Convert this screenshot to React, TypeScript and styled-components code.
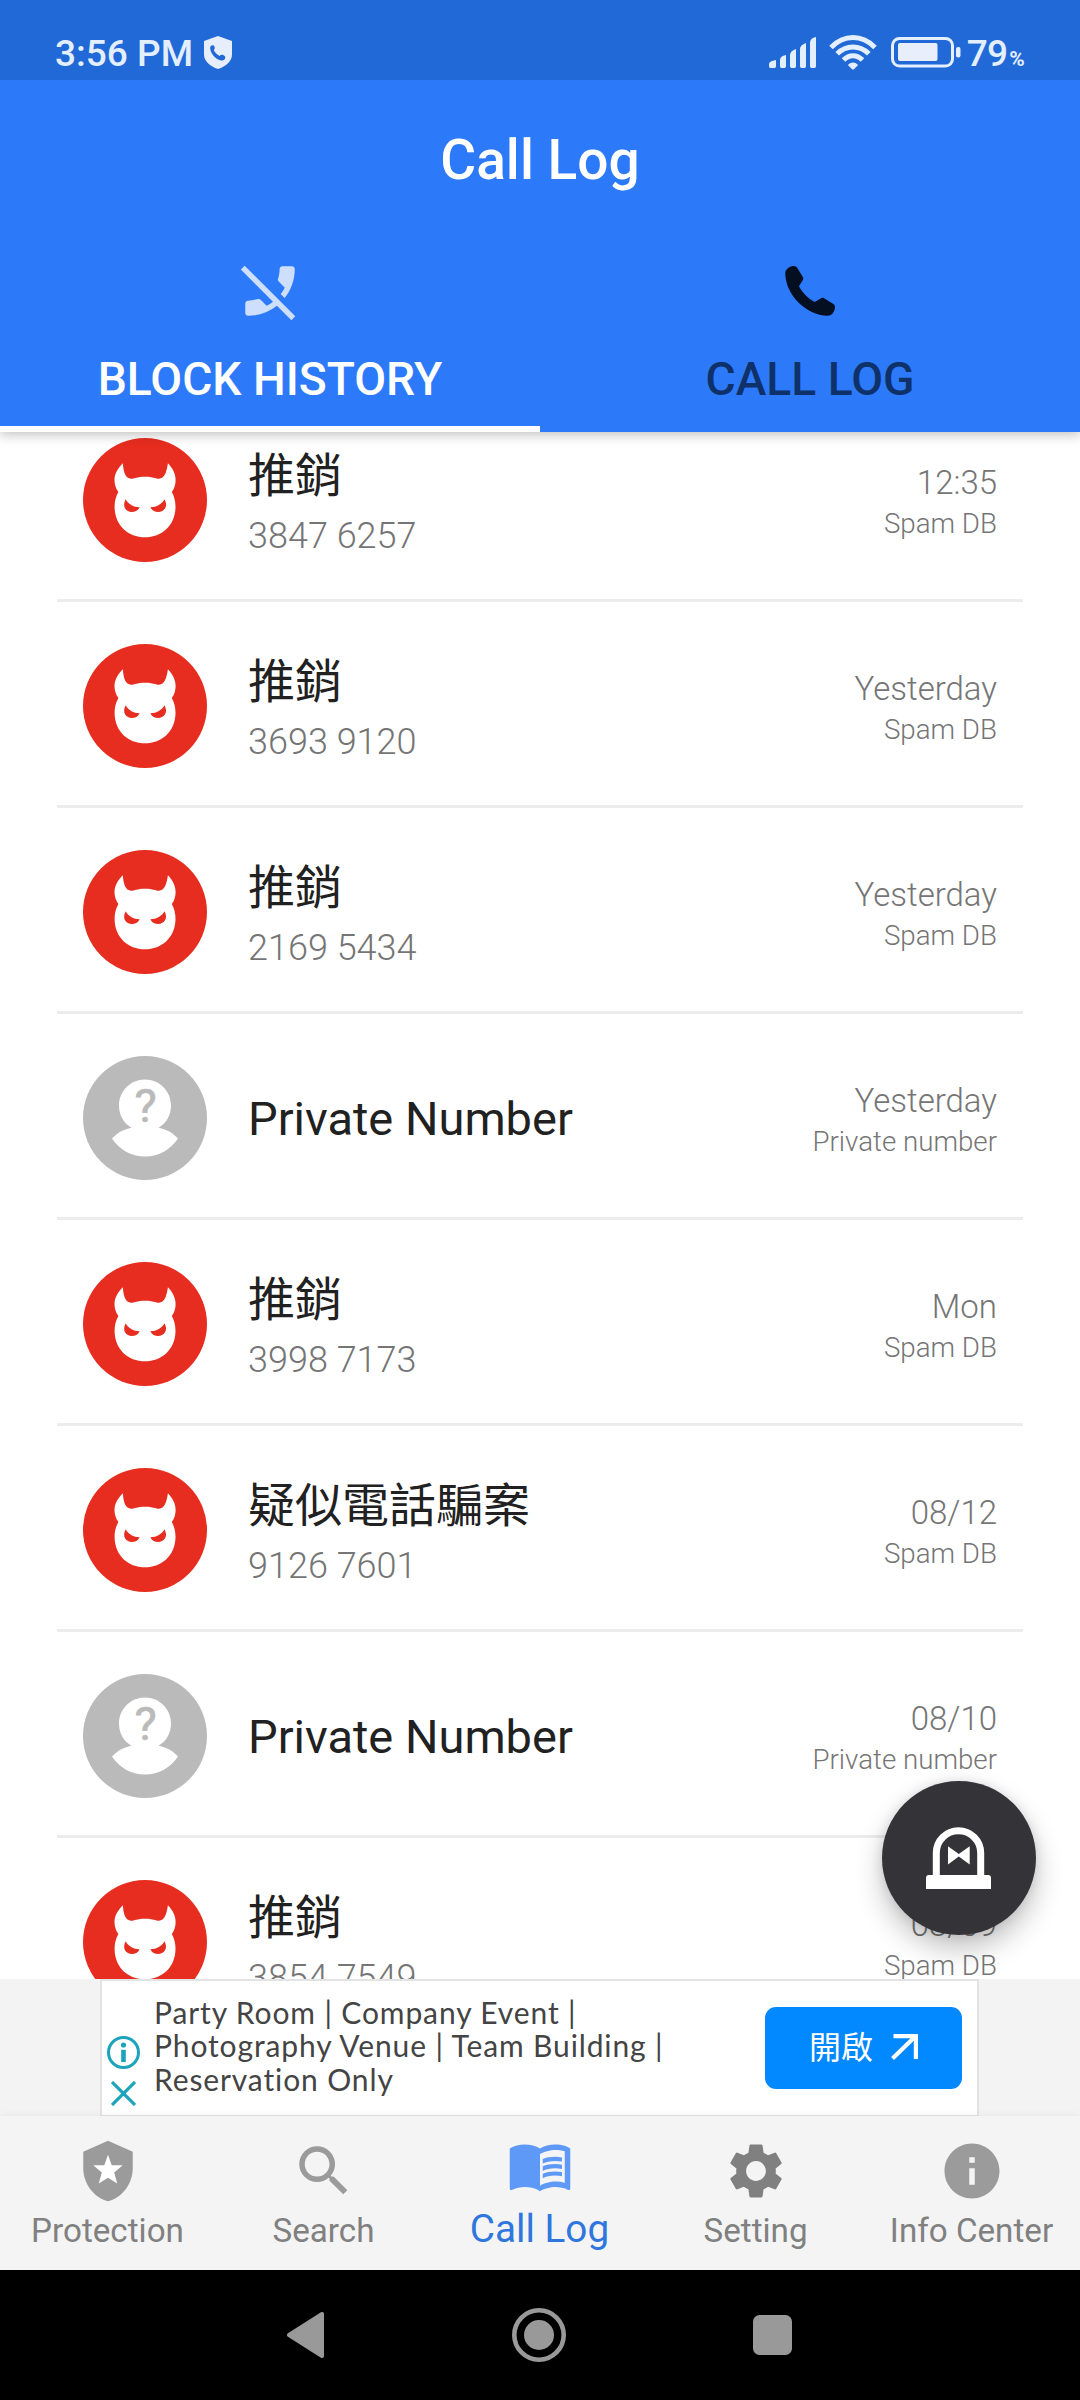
import React from "react";
import styled, { createGlobalStyle } from "styled-components";
import { MdInfo, MdMenuBook, MdPhoneDisabled, MdSearch, MdSettings } from "react-icons/md";

const GlobalStyle = createGlobalStyle`
  * { box-sizing: border-box; }
  body { margin: 0; background: #fff; }
  svg { display: block; flex: none; }
`;

const Screen = styled.div`
  display: flex;
  flex-direction: column;
  position: relative;
  width: 1080px;
  height: 2400px;
  overflow: hidden;
  background: #fff;
  font-family: Roboto, "Noto Sans CJK TC", sans-serif;
`;

const StatusBar = styled.div`
  display: flex;
  justify-content: space-between;
  position: relative;
  z-index: 2;
  height: 80px;
  padding: 33px 56px 0 55px;
  background: #2069d6;
  color: #e3eeff;
`;

const StatusGroup = styled.div`
  display: flex;
  align-items: flex-start;
  height: 42px;
`;

const Clock = styled.span`
  font-size: 37px;
  font-weight: 500;
  line-height: 42px;
  width: 149px;
  white-space: nowrap;
`;

const Percent = styled.span`
  margin-left: 6px;
  font-size: 37px;
  font-weight: 500;
  line-height: 42px;
  letter-spacing: -0.8px;
  small {
    margin-left: 2px;
    font-size: 21px;
    font-weight: 700;
  }
`;

const Header = styled.header`
  display: flex;
  flex-direction: column;
  position: relative;
  z-index: 1;
  height: 352px;
  background: #2c7afa;
  box-shadow: 0 2px 12px rgba(0, 0, 0, 0.28);
`;

const Title = styled.h1`
  margin: 0;
  padding-top: 48px;
  height: 154px;
  font-size: 55px;
  font-weight: 500;
  line-height: 64px;
  text-align: center;
  color: #fff;
`;

const Tabs = styled.div`
  display: flex;
  flex: 1;
`;

const Tab = styled.div<{ $active?: boolean }>`
  flex: 1;
  display: flex;
  flex-direction: column;
  align-items: center;
  padding-top: 24px;
  border-bottom: 6px solid ${(p) => (p.$active ? "#fff" : "transparent")};
  color: ${(p) => (p.$active ? "#fff" : "#0f3169")};
  font-size: 46.2px;
  font-weight: 500;
  svg {
    margin-bottom: 27px;
    color: ${(p) => (p.$active ? "#cedffe" : "#050f22")};
  }
  span {
    line-height: 56px;
    white-space: nowrap;
  }
`;

const List = styled.div`
  flex: none;
  height: 1547px;
  overflow: hidden;
  padding: 0 57px;
`;

const ListContent = styled.div`
  margin-top: -36px;
`;

const Row = styled.div`
  display: flex;
  align-items: center;
  height: 206px;
  padding: 5px 26px 0;
  border-bottom: 3px solid #ececec;
`;

const Details = styled.div<{ $single: boolean }>`
  flex: 1;
  display: flex;
  flex-direction: column;
  gap: ${(p) => (p.$single ? "0" : "10px")};
  padding: ${(p) => (p.$single ? "2px" : "5px")} 0 0 41px;
`;

const Name = styled.div`
  font-size: 47px;
  line-height: 56px;
  color: #212121;
`;

const Phone = styled.div`
  font-size: 36px;
  font-weight: 300;
  line-height: 44px;
  color: #757575;
`;

const Meta = styled.div`
  display: flex;
  flex-direction: column;
  align-items: flex-end;
  gap: 3px;
  padding-top: 4px;
  font-weight: 300;
  color: #757575;
`;

const When = styled.div`
  font-size: 33px;
  line-height: 40px;
`;

const Source = styled.div`
  font-size: 27.7px;
  line-height: 36px;
`;

const AdStrip = styled.div`
  flex: none;
  display: flex;
  height: 137px;
  padding: 0 101px 0 100px;
  background: #f3f3f3;
`;

const AdCard = styled.div`
  flex: 1;
  display: flex;
  align-items: flex-start;
  border: 2px solid #e2e3e5;
  border-bottom-width: 1px;
  background: #fff;
`;

const AdMarks = styled.div`
  width: 33px;
  margin: 55px 0 0 5px;
  display: flex;
  flex-direction: column;
  align-items: center;
  gap: 12px;
`;

const AdText = styled.div`
  flex: 1;
  padding: 15px 0 0 14px;
  font-family: Lato, sans-serif;
  font-size: 30px;
  line-height: 33.4px;
  letter-spacing: 0.88px;
  color: #444;
  white-space: nowrap;
`;

const AdButton = styled.div`
  display: flex;
  align-items: center;
  justify-content: center;
  gap: 18px;
  width: 197px;
  height: 82px;
  margin: 26px 15px 0 0;
  border-radius: 11px;
  background: #0288ff;
  color: #fff;
  font-size: 32px;
  span {
    padding-bottom: 7px;
  }
  svg {
    margin-bottom: 2px;
  }
`;

const BottomNav = styled.nav`
  flex: none;
  display: flex;
  height: 154px;
  background: #f4f4f4;
  box-shadow: 0 -1px 8px rgba(0, 0, 0, 0.05);
`;

const NavItem = styled.div<{ $active?: boolean; $icon: string }>`
  flex: 1;
  display: flex;
  flex-direction: column;
  align-items: center;
  padding-top: ${(p) => (p.$active ? 16 : 22)}px;
  font-size: ${(p) => (p.$active ? 38.7 : 33.2)}px;
  color: ${(p) => (p.$active ? "#2f76dd" : "#808080")};
  svg {
    color: ${(p) => p.$icon};
  }
  span {
    line-height: 40px;
    margin-top: ${(p) => (p.$active ? 11 : 7)}px;
    padding-right: 1px;
    white-space: nowrap;
  }
`;

const SystemNav = styled.div`
  flex: none;
  display: flex;
  align-items: center;
  justify-content: space-between;
  height: 130px;
  padding: 0 288px 0 287px;
  background: #000;
`;

const Fab = styled.div`
  position: absolute;
  z-index: 2;
  left: 882px;
  top: 1781px;
  width: 154px;
  height: 154px;
  border-radius: 50%;
  background: #343338;
  box-shadow: 0 14px 28px rgba(0, 0, 0, 0.24), 0 0 12px rgba(0, 0, 0, 0.1);
`;

const ShieldPhone = () => (
  <svg width="28" height="33" viewBox="0 0 28 33">
    <path d="M14 0 28 5v13.500c0 6.500-6 12-14 14.500C6 30.500 0 25 0 18.500V5Z" fill="#e6eefc" />
    <path
      d="M6.600 10.200c1-1.200 3-1.600 3.800.2.700 1.500.3 2.600-.6 3.500 1.300 2.700 3.200 4.600 5.800 6 .9-1 2-1.300 3.500-.9 2.200.7 2.400 2 2 3.600-.5 1.900-2.700 2.300-5 1.600C11 22.500 7 18 6.200 12.700c-.1-.9 0-1.900.4-2.500Z"
      fill="#2069d6"
    />
  </svg>
);

const Signal = () => (
  <svg width="48" height="32" viewBox="0 0 48 32" fill="currentColor">
    <path d="M0 27q0-3 7-4v6q0 2-1.500 2H1.500Q0 31 0 29ZM11 23q0-4 6-5v11q0 2-1.500 2H12.500Q11 31 11 29ZM21 18q0-4 6-6v17q0 2-1.500 2H22.500Q21 31 21 29ZM31 12q0-4 6-6v23q0 2-1.500 2H32.500Q31 31 31 29ZM41 6q0-5 6-6v29q0 2-1.500 2H42.500Q41 31 41 29Z" />
  </svg>
);

const Wifi = () => (
  <svg width="48" height="35" viewBox="0 0 48 35" fill="none" stroke="currentColor" strokeWidth="5">
    <path d="M2 12.500C15-.7 33-.7 46 12.500" />
    <path d="M8.200 18.800C17 9.800 31 9.800 39.800 18.800" />
    <path d="M14.500 25C20 19.200 28 19.200 33.500 25" />
    <path d="M18.800 30Q24 25.200 29.200 30L25.200 34q-1.200 1-2.400 0Z" fill="currentColor" stroke="none" />
  </svg>
);

const Battery = () => (
  <svg width="70" height="31" viewBox="0 0 70 31">
    <rect x="1.500" y="1.500" width="60" height="27.500" rx="7" fill="none" stroke="currentColor" strokeWidth="3" />
    <rect x="7" y="6" width="39.500" height="18" rx="2" fill="#e8eefc" />
    <rect x="65" y="10" width="4.500" height="10.500" rx="2" fill="currentColor" />
  </svg>
);

const Handset = () => (
  <svg width="66" height="66" viewBox="0 0 24 24" fill="currentColor">
    <path d="M3 5.600C3 4.300 4.200 3.300 5.600 2.950C6.500 2.750 7 3 7.400 3.600L9.400 6.900C9.650 7.350 9.600 7.700 9.350 8.100L8 10.300C9.300 12.700 11.300 14.800 13.700 16L15.900 14.700C16.300 14.450 16.700 14.400 17.100 14.650L20.500 16.700C21 17 21.150 17.500 21.050 18.200C20.800 20 19.800 21 18.400 21C10.500 20.700 3.200 13.500 3 5.600Z" />
  </svg>
);

const DevilAvatar = () => (
  <svg width="124" height="124" viewBox="0 0 124 124">
    <circle cx="62" cy="62" r="62" fill="#e72d1f" />
    <path
      d="M39.900 25.300C40.300 34 42.500 40.700 48 40.700C51.500 40.700 54 38.700 62 38.700C70 38.700 72.500 40.700 76 40.700C81.500 40.700 83.700 34 84.900 25.300C89.500 30 92.800 36 92.600 42.500C92.500 47 91.200 51 88.800 54C91.300 58.500 92.600 63.500 92.500 69.500C92 87.500 79 99.300 62 99.300C45 99.300 32 87.500 31.600 69.500C31.500 63.500 32.800 58.500 35.400 54C33 51 31.700 47 31.500 42.500C31.300 36 35 30 39.900 25.300Z"
      fill="#fff"
    />
    <path
      d="M42.700 61.300C45 66 50.500 69.300 56.600 69.300C55.200 72.600 52 74.100 48.800 74.100C43.500 74 38.500 69 42.700 61.300ZM81.500 61.300C79 66 73.500 69.300 67.400 69.300C68.800 72.600 72 74.100 75.200 74.100C80.500 74 85.700 69 81.500 61.300Z"
      fill="#e72d1f"
    />
  </svg>
);

const UnknownAvatar = () => (
  <svg width="124" height="124" viewBox="0 0 124 124">
    <circle cx="62" cy="62" r="62" fill="#bababa" />
    <path
      d="M48.500 71.800C40.500 67 36 59 36 49.500C36 35 47.500 23.500 62 23.500S88 35 88 49.500C88 59 83.500 67 75.500 71.800C84 73.500 90.500 77.500 95 82.500C87.500 93.500 76 100.600 62 100.600S36.500 93.500 29 82.500C33.500 77.500 40 73.500 48.500 71.800Z"
      fill="#fff"
    />
    <text x="62.500" y="65.600" textAnchor="middle" fontSize="47" fontWeight="400" fill="#bababa" stroke="#bababa" strokeWidth="0.700">?</text>
  </svg>
);

const ShieldStar = () => (
  <svg width="66" height="66" viewBox="0 0 24 24">
    <path d="M12 1 3 5v6c0 5.550 3.840 10.740 9 12 5.160-1.260 9-6.450 9-12V5Z" fill="currentColor" />
    <path d="m12 6.100 1.350 3.800h4l-3.100 2.600 1.100 4-3.350-2.050-3.350 2.050 1.100-4-3.100-2.600h4Z" fill="#fff" />
  </svg>
);

const SirenIcon = () => (
  <svg width="154" height="154" viewBox="0 0 154 154">
    <path d="M54.300 96V72A22.200 22.200 0 0 1 98.700 72V96" fill="none" stroke="#fff" strokeWidth="7" />
    <path d="M44 108V97q0-3 3-3h59q3 0 3 3v11Z" fill="#fff" />
    <path d="M66 65.300 76.800 73 87.700 65.300V83.500L76.800 75.500 66 83.500Z" fill="#fff" />
  </svg>
);

type Call = { name: string; phone?: string; when: string; source: string };

const calls: Call[] = [
  { name: "推銷", phone: "3847 6257", when: "12:35", source: "Spam DB" },
  { name: "推銷", phone: "3693 9120", when: "Yesterday", source: "Spam DB" },
  { name: "推銷", phone: "2169 5434", when: "Yesterday", source: "Spam DB" },
  { name: "Private Number", when: "Yesterday", source: "Private number" },
  { name: "推銷", phone: "3998 7173", when: "Mon", source: "Spam DB" },
  { name: "疑似電話騙案", phone: "9126 7601", when: "08/12", source: "Spam DB" },
  { name: "Private Number", when: "08/10", source: "Private number" },
  { name: "推銷", phone: "3854 7549", when: "08/09", source: "Spam DB" },
];

const CallRow = ({ name, phone, when, source }: Call) => (
  <Row>
    {phone ? <DevilAvatar /> : <UnknownAvatar />}
    <Details $single={!phone}>
      <Name>{name}</Name>
      {phone && <Phone>{phone}</Phone>}
    </Details>
    <Meta>
      <When>{when}</When>
      <Source>{source}</Source>
    </Meta>
  </Row>
);

const SignalSlot = styled.div`
  padding: 4px 12px 0 0;
`;
const WifiSlot = styled.div`
  padding: 2px 14px 0 0;
`;
const BatterySlot = styled.div`
  padding-top: 4px;
`;
const ShieldSlot = styled.div`
  padding-top: 3px;
`;

export default function App() {
  return (
    <Screen lang="zh-Hant">
      <GlobalStyle />
      <StatusBar>
        <StatusGroup>
          <Clock>3:56 PM</Clock>
          <ShieldSlot><ShieldPhone /></ShieldSlot>
        </StatusGroup>
        <StatusGroup>
          <SignalSlot><Signal /></SignalSlot>
          <WifiSlot><Wifi /></WifiSlot>
          <BatterySlot><Battery /></BatterySlot>
          <Percent>79<small>%</small></Percent>
        </StatusGroup>
      </StatusBar>
      <Header>
        <Title>Call Log</Title>
        <Tabs>
          <Tab $active>
            <MdPhoneDisabled size={66} />
            <span>BLOCK HISTORY</span>
          </Tab>
          <Tab>
            <Handset />
            <span>CALL LOG</span>
          </Tab>
        </Tabs>
      </Header>
      <List>
        <ListContent>
          {calls.map((call, i) => (
            <CallRow key={i} {...call} />
          ))}
        </ListContent>
      </List>
      <AdStrip>
        <AdCard>
          <AdMarks>
            <svg width="33" height="33" viewBox="0 0 33 33">
              <circle cx="16.500" cy="16.500" r="15" fill="none" stroke="#1ba4bb" strokeWidth="3" />
              <circle cx="16.500" cy="9" r="2.600" fill="#1ba4bb" />
              <rect x="14.200" y="13.800" width="4.600" height="12.200" fill="#1ba4bb" />
            </svg>
            <svg width="25" height="25" viewBox="0 0 25 25">
              <path d="M1 1 24 24M24 1 1 24" stroke="#1ba4bb" strokeWidth="3.200" />
            </svg>
          </AdMarks>
          <AdText>
            Party Room | Company Event |<br />
            Photography Venue | Team Building |<br />
            Reservation Only
          </AdText>
          <AdButton>
            <span>開啟</span>
            <svg width="27" height="26" viewBox="0 0 27 26" fill="none" stroke="#fff" strokeWidth="4.200">
              <path d="M1.500 24.500 24 2.800M2.500 2.100H24.900V25" />
            </svg>
          </AdButton>
        </AdCard>
      </AdStrip>
      <BottomNav>
        <NavItem $icon="#9b9b9b"><ShieldStar /><span>Protection</span></NavItem>
        <NavItem $icon="#9b9b9b"><MdSearch size={66} /><span>Search</span></NavItem>
        <NavItem $active $icon="#5f99f7"><MdMenuBook size={66} /><span>Call Log</span></NavItem>
        <NavItem $icon="#808080"><MdSettings size={66} /><span>Setting</span></NavItem>
        <NavItem $icon="#9b9b9b"><MdInfo size={66} /><span>Info Center</span></NavItem>
      </BottomNav>
      <SystemNav>
        <svg width="38" height="46" viewBox="0 0 38 46">
          <path d="M2 23 35 2V44Z" fill="#999" stroke="#999" strokeWidth="4" strokeLinejoin="round" />
        </svg>
        <svg width="54" height="54" viewBox="0 0 54 54">
          <circle cx="27" cy="27" r="24.700" fill="none" stroke="#999" strokeWidth="4.600" />
          <circle cx="27" cy="27" r="15" fill="#999" />
        </svg>
        <svg width="39" height="40" viewBox="0 0 39 40">
          <rect width="39" height="40" rx="6.500" fill="#999" />
        </svg>
      </SystemNav>
      <Fab><SirenIcon /></Fab>
    </Screen>
  );
}
